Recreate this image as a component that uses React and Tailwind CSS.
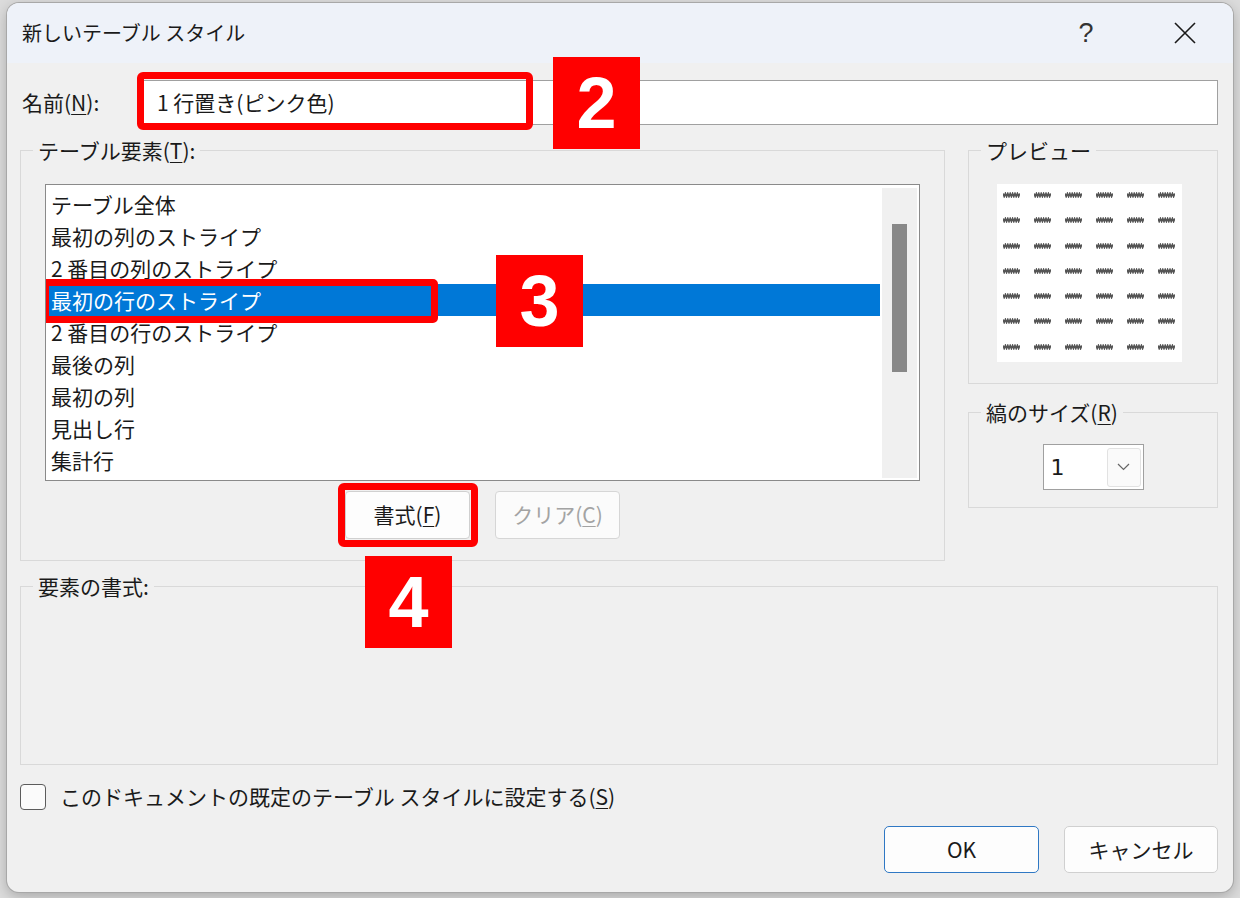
import React from 'react';

const items = [
  'テーブル全体',
  '最初の列のストライプ',
  '2 番目の列のストライプ',
  '最初の行のストライプ',
  '2 番目の行のストライプ',
  '最後の列',
  '最初の列',
  '見出し行',
  '集計行',
];

const U = ({ children }) => (
  <span className="underline underline-offset-[3px] decoration-[1px]">{children}</span>
);

function Group({ label, className = '', children }) {
  return (
    <fieldset className={`border border-[#d9d9d9] ${className}`}>
      <legend className="ml-[12px] px-[5px] text-[21px] leading-[26px]">{label}</legend>
      {children}
    </fieldset>
  );
}

function Badge({ n, className }) {
  return (
    <div
      className={`absolute w-[87px] h-[92px] bg-[#ff0000] text-white flex items-center justify-center text-[72px] leading-none font-bold font-['Liberation_Sans',Arial,sans-serif] ${className}`}
    >
      {n}
    </div>
  );
}

function Mark() {
  return (
    <svg width="17" height="6" viewBox="0 0 17 6">
      <polyline
        points="0,1.5 1.2,4.5 2.4,1.5 3.6,4.5 4.8,1.5 6,4.5 7.2,1.5 8.4,4.5 9.6,1.5 10.8,4.5 12,1.5 13.2,4.5 14.4,1.5 15.6,4.5 16.8,1.5"
        fill="none"
        stroke="#555"
        strokeWidth="1.7"
      />
    </svg>
  );
}

export default function App() {
  return (
    <div className="w-[1240px] h-[898px] bg-[#dcdcdc] pt-[3px] pl-[7px] overflow-hidden text-[#1a1a1a] font-['Noto_Sans_CJK_JP','Noto_Sans',sans-serif]">
      <div className="relative w-[1226px] h-[889px] rounded-[12px] bg-[#f0f0f0] overflow-hidden shadow-[0_0_0_1px_#a8a8a8,0_4px_14px_rgba(0,0,0,0.25)] flex flex-col">
        {/* Title bar */}
        <div className="h-[60px] shrink-0 bg-[#eef2f9] flex items-center pl-[15px]">
          <span className="text-[20px]">新しいテーブル スタイル</span>
          <span className="ml-auto w-[40px] text-center text-[27px] font-['Liberation_Sans',sans-serif] text-[#333]">?</span>
          <span className="ml-[49px] w-[60px] mr-[18px] flex justify-center">
            <svg width="22" height="22" viewBox="0 0 22 22">
              <path d="M1 1 L21 21 M21 1 L1 21" stroke="#1a1a1a" strokeWidth="1.6" />
            </svg>
          </span>
        </div>

        {/* Body */}
        <div className="flex-1 flex flex-col pl-[13px] pr-[15px]">
          {/* Name */}
          <div className="mt-[17px] h-[45px] flex items-center">
            <label className="w-[118px] pl-[2px] text-[21px]">
              名前(<U>N</U>):
            </label>
            <div className="relative flex-1 h-[45px] bg-white border border-[#a0a0a0] pl-[18px] flex items-center text-[21px]">
              1 行置き(ピンク色)
              <div className="absolute -left-[2px] -top-[9px] w-[396px] h-[58px] border-[7px] border-[#ff0000] rounded-[6px]" />
            </div>
          </div>

          {/* Middle */}
          <div className="mt-[12px] flex">
            <Group label={<>テーブル要素(<U>T</U>):</>} className="w-[925px] h-[424px] flex flex-col">
              <div className="mt-[21px] mx-[24px] h-[297px] bg-white border border-[#8a8a8a] flex">
                <div className="flex-1 pl-[1px] pt-[3px] overflow-hidden">
                  {items.map((t, i) =>
                    i === 3 ? (
                      <div key={t} className="relative h-[32px] leading-[32px] pl-[4px] text-[21px] bg-[#0078d7] text-white whitespace-nowrap">
                        {t}
                        <div className="absolute -left-[5px] -top-[5px] w-[396px] h-[44px] border-[7px] border-[#ff0000] rounded-[5px]" />
                      </div>
                    ) : (
                      <div key={t} className="h-[32px] leading-[32px] pl-[4px] text-[21px] whitespace-nowrap">
                        {t}
                      </div>
                    )
                  )}
                </div>
                <div className="ml-[2px] mr-[2px] w-[35px] mt-[3px] mb-[2px] bg-[#f0f0f0]">
                  <div className="mt-[36px] mx-auto w-[15px] h-[148px] bg-[#888888]" />
                </div>
              </div>
              <div className="mt-[10px] flex justify-center gap-[25px]">
                <div className="relative">
                  <button className="w-[125px] h-[48px] rounded-[4px] border border-[#d0d0d0] bg-[#fdfdfd] text-[21px]">
                    書式(<U>F</U>)
                  </button>
                  <div className="absolute -left-[7px] -top-[8px] w-[140px] h-[64px] border-[7px] border-[#ff0000] rounded-[6px]" />
                </div>
                <button className="w-[125px] h-[48px] rounded-[4px] border border-[#d6d6d6] bg-[#fbfbfb] text-[21px] text-[#a3a3a3]">
                  クリア(<U>C</U>)
                </button>
              </div>
            </Group>

            <div className="ml-[23px] w-[250px] flex flex-col">
              <Group label="プレビュー" className="h-[247px]">
                <div className="mt-[21px] ml-[28px] w-[185px] h-[178px] bg-white pt-[8px] pl-[6px] grid grid-cols-[repeat(6,17px)] auto-rows-[6px] gap-x-[14px] gap-y-[19.3px]">
                  {Array.from({ length: 42 }).map((_, i) => (
                    <Mark key={i} />
                  ))}
                </div>
              </Group>
              <Group label={<>縞のサイズ(<U>R</U>)</>} className="mt-[15px] h-[109px]">
                <div className="mt-[19px] mx-auto w-[101px] h-[46px] bg-white border border-[#a0a0a0] flex items-center">
                  <span className="pl-[7px] text-[22px] font-['DejaVu_Sans',sans-serif]">1</span>
                  <div className="ml-auto mr-[2px] w-[34px] h-[39px] border border-[#e2e2e2] rounded-[3px] bg-[#fafafa] flex items-center justify-center">
                    <svg width="13" height="8" viewBox="0 0 13 8">
                      <path d="M1 1 L6.5 6.5 L12 1" fill="none" stroke="#666" strokeWidth="1.2" />
                    </svg>
                  </div>
                </div>
              </Group>
            </div>
          </div>

          {/* Element format */}
          <Group label="要素の書式:" className="mt-[12px] h-[192px]" />

          {/* Checkbox */}
          <div className="mt-[18px] h-[27px] flex items-center">
            <div className="w-[26px] h-[26px] rounded-[4px] border-[1.5px] border-[#5c5c5c] bg-[#fbfbfb]" />
            <span className="ml-[14px] text-[21px]">
              このドキュメントの既定のテーブル スタイルに設定する(<U>S</U>)
            </span>
          </div>

          {/* Buttons */}
          <div className="mt-[16px] flex justify-end gap-[25px]">
            <button className="w-[155px] h-[47px] rounded-[5px] border-[1.5px] border-[#2f78c4] bg-[#fdfdfd] text-[21px]">
              OK
            </button>
            <button className="w-[154px] h-[47px] rounded-[5px] border border-[#d0d0d0] bg-[#fdfdfd] text-[21px]">
              キャンセル
            </button>
          </div>
        </div>

        <Badge n="2" className="left-[546px] top-[54px]" />
        <Badge n="3" className="left-[489px] top-[252px]" />
        <Badge n="4" className="left-[358px] top-[553px]" />
      </div>
    </div>
  );
}
